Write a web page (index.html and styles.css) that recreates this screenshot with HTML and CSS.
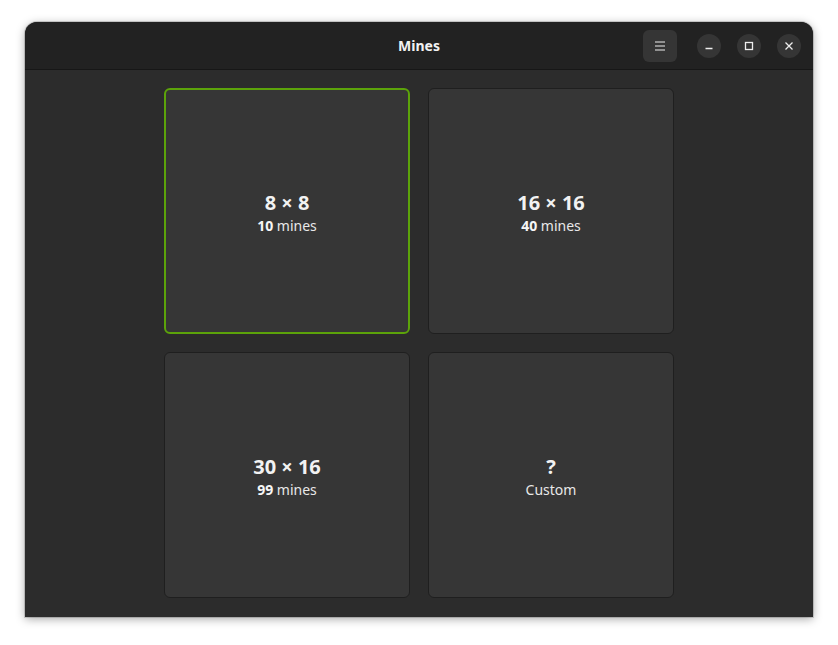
FILE: index.html
```html
<!DOCTYPE html>
<html>
<head>
<meta charset="utf-8">
<link rel="stylesheet" href="styles.css">
</head>
<body>
<div class="window">
  <header class="headerbar">
    <div class="title">Mines</div>
    <div class="controls">
      <button class="menu-btn" aria-label="Menu">
        <svg width="16" height="16" viewBox="0 0 16 16"><path d="M3 4h10M3 8h10M3 12h10" stroke="#eee" stroke-width="1.2" fill="none"/></svg>
      </button>
      <div class="wbtns">
        <button class="wbtn" aria-label="Minimize"><svg width="16" height="16" viewBox="0 0 16 16"><path d="M4.5 10.5h7" stroke="#eee" stroke-width="1.3"/></svg></button>
        <button class="wbtn" aria-label="Maximize"><svg width="16" height="16" viewBox="0 0 16 16"><rect x="4.5" y="4.5" width="7" height="7" stroke="#eee" stroke-width="1.3" fill="none"/></svg></button>
        <button class="wbtn" aria-label="Close"><svg width="16" height="16" viewBox="0 0 16 16"><path d="M4.5 4.5l7 7M11.5 4.5l-7 7" stroke="#eee" stroke-width="1.3"/></svg></button>
      </div>
    </div>
  </header>
  <main class="content">
    <div class="grid">
      <div class="card selected"><div class="big">8 × 8</div><div class="small"><b>10</b> mines</div></div>
      <div class="card"><div class="big">16 × 16</div><div class="small"><b>40</b> mines</div></div>
      <div class="card"><div class="big">30 × 16</div><div class="small"><b>99</b> mines</div></div>
      <div class="card"><div class="big">?</div><div class="small">Custom</div></div>
    </div>
  </main>
</div>
</body>
</html>
```
FILE: styles.css
```css
* { box-sizing: border-box; }
html, body { margin: 0; padding: 0; background: #ffffff; }
body {
  width: 838px; height: 645px; overflow: hidden;
  font-family: "Noto Sans", "Open Sans", sans-serif;
  padding: 22px 0 0 25px;
}
.window {
  width: 788px; height: 595px;
  border-radius: 12px 12px 0 0;
  background: #2c2c2c;
  box-shadow: 0 2px 10px rgba(0,0,0,0.35), 0 0 0 1px rgba(0,0,0,0.15);
  overflow: hidden;
  display: flex; flex-direction: column;
}
.headerbar {
  height: 48px; flex: none;
  background: #222222;
  border-bottom: 1px solid #171717;
  position: relative;
  display: flex; align-items: center; justify-content: center;
}
.title {
  color: #f2f2f2; font-weight: 700; font-size: 14px;
}
.controls {
  position: absolute; right: 12px; top: 8px;
  display: flex; align-items: center;
}
button { border: none; padding: 0; margin: 0; cursor: default; display: flex; align-items: center; justify-content: center; }
.menu-btn {
  width: 34px; height: 32px; border-radius: 6px;
  background: #353535;
}
.wbtns { display: flex; gap: 16px; margin-left: 20px; }
.wbtn {
  width: 24px; height: 24px; border-radius: 50%;
  background: #353535;
}
.content {
  flex: 1;
  display: flex; justify-content: center;
  padding-top: 18px;
}
.grid {
  display: grid;
  grid-template-columns: 246px 246px;
  grid-template-rows: 246px 246px;
  gap: 18px;
}
.card {
  background: #363636;
  border: 1px solid #1f1f1f;
  border-radius: 6px;
  display: flex; flex-direction: column; align-items: center; justify-content: center;
  padding-top: 1px;
  color: #f2f2f2;
}
.card.selected {
  border: 2px solid #5ca30a;
}
.big { font-size: 20px; font-weight: 700; line-height: normal; }
.small { font-size: 14px; line-height: normal; color: #e8e8e8; }
.small b { color: #f6f6f6; }
```
